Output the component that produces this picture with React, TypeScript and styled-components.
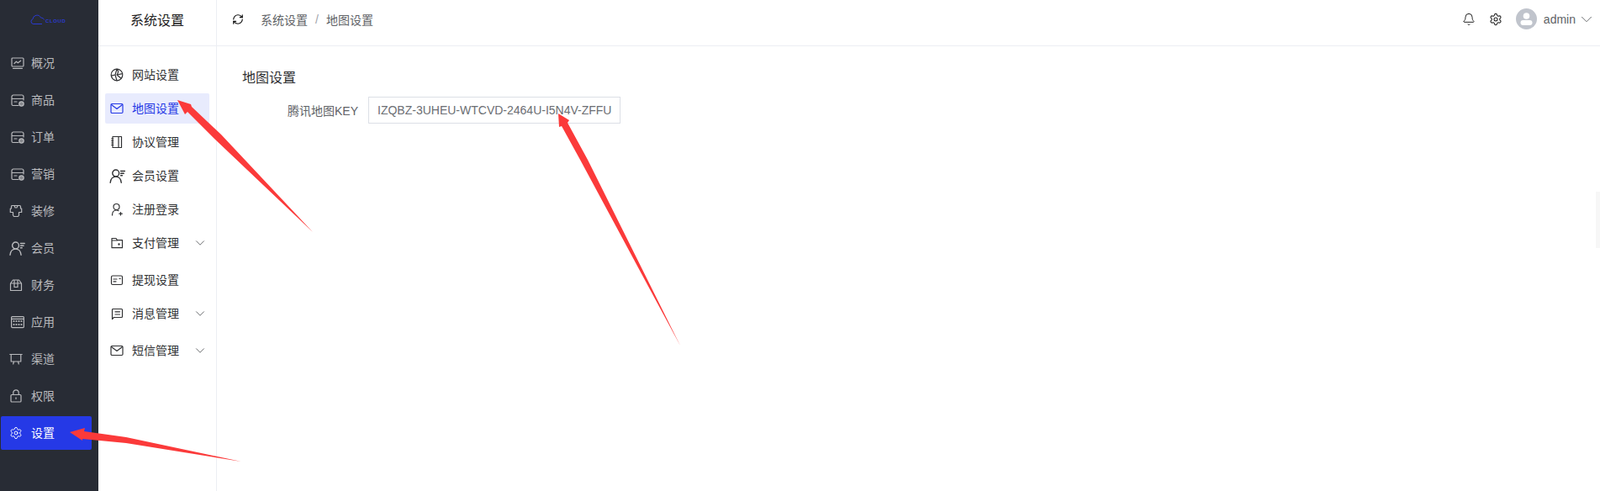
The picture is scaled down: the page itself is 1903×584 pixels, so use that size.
import * as React from 'react';
import styled, { createGlobalStyle } from 'styled-components';
import { Bell, ChevronDown, RefreshCw, Settings } from 'lucide-react';

const GlobalStyle = createGlobalStyle`
  html, body {
    margin: 0;
    padding: 0;
    background: #fff;
    font-family: "Liberation Sans", "Noto Sans CJK SC", sans-serif;
    font-size: 14px;
    overflow: hidden;
  }
  * { box-sizing: border-box; }
`;

const Page = styled.div`
  position: relative;
  display: flex;
  height: 584px;
  overflow: hidden;
`;

const Sidebar = styled.aside`
  flex: 0 0 117px;
  background: #282c35;
`;

const LogoBox = styled.div`
  height: 55px;
  padding: 17px 0 0 36px;
  display: flex;
  align-items: flex-start;
  color: #2a3ad0;
`;

const LogoText = styled.span`
  font-size: 6px;
  font-weight: 700;
  letter-spacing: 0.6px;
  line-height: 14px;
  margin: 1px 0 0 1px;
`;

const IconSlot = styled.span`
  flex: 0 0 16px;
  width: 16px;
  height: 16px;
  display: flex;
  align-items: center;
  justify-content: center;
`;

const ItemText = styled.span`
  margin-top: -2px;
`;

const SideItem = styled.div<{ $active?: boolean }>`
  display: flex;
  align-items: center;
  gap: 8px;
  width: 108px;
  height: 40px;
  margin: 0 0 4px 1px;
  padding-left: 12px;
  border-radius: 2px;
  font-size: 14px;
  color: ${p => (p.$active ? '#fff' : '#b9babd')};
  background: ${p => (p.$active ? '#2539e6' : 'transparent')};
`;

const SideGear = styled(Settings)`
  flex: none;
  margin-left: -4px;
`;

const SubNav = styled.nav`
  flex: 0 0 141px;
  border-right: 1px solid #eceef3;
`;

const SubTitle = styled.div`
  height: 55px;
  padding-bottom: 9px;
  border-bottom: 1px solid #eceef3;
  display: flex;
  align-items: center;
  justify-content: center;
  font-size: 16px;
  color: #222;
`;

const SubList = styled.div`
  padding: 16px 8px 0;
`;

const SubItem = styled.div<{ $active?: boolean; $group?: boolean }>`
  display: flex;
  align-items: center;
  gap: 10px;
  height: 36px;
  margin-bottom: ${p => (p.$group ? '8px' : '4px')};
  padding: 0 2px 0 6px;
  border-radius: 2px;
  font-size: 14px;
  color: ${p => (p.$active ? '#2539e6' : '#303133')};
  background: ${p => (p.$active ? '#e8ebfd' : 'transparent')};
`;

const Caret = styled(ChevronDown)`
  margin-left: auto;
  color: #4a4c50;
`;

const Main = styled.main`
  flex: 1;
  min-width: 0;
`;

const Header = styled.header`
  height: 55px;
  padding: 0 5px 9px 18px;
  border-bottom: 1px solid #eceef3;
  display: flex;
  align-items: center;
`;

const Crumbs = styled.div`
  display: flex;
  align-items: center;
  margin-left: 20px;
  color: #606266;
  font-size: 14px;
`;

const CrumbSep = styled.span`
  margin: 0 9px;
  color: #a0a3a9;
`;

const HeaderRight = styled.div`
  margin-left: auto;
  display: flex;
  align-items: center;
  gap: 16px;
  color: #222;
`;

const UserBox = styled.div`
  display: flex;
  align-items: center;
  color: #606266;
`;

const Avatar = styled.div`
  width: 25px;
  height: 25px;
  margin-right: 8px;
  border-radius: 50%;
  background: #c0c4cc;
  display: flex;
  align-items: center;
  justify-content: center;
`;

const AdminName = styled.span`
  font-size: 14px;
  margin-right: 2px;
`;

const Content = styled.section`
  padding: 28px 0 0 30px;
`;

const SectionTitle = styled.h2`
  margin: 0 0 12px;
  font-size: 16px;
  font-weight: 400;
  line-height: 20px;
  color: #303133;
`;

const FormRow = styled.div`
  display: flex;
  align-items: center;
`;

const FieldLabel = styled.label`
  width: 150px;
  padding-right: 12px;
  text-align: right;
  color: #606266;
  font-size: 14px;
`;

const FieldInput = styled.input`
  width: 300px;
  height: 32px;
  padding: 0 10px;
  border: 1px solid #dcdfe6;
  border-radius: 0;
  outline: none;
  font: inherit;
  font-size: 14px;
  color: #6b6e73;
  background: #fff;
`;

const EdgeTab = styled.div`
  position: absolute;
  right: 0;
  top: 228px;
  width: 5px;
  height: 67px;
  background: #f7f7f7;
`;

const ArrowLayer = styled.svg`
  position: absolute;
  inset: 0;
  pointer-events: none;
`;

type GlyphProps = React.PropsWithChildren<{ size?: number; shift?: number }>;

// shift moves the drawing left inside its slot, some of the icons sit off centre
const Glyph: React.FC<GlyphProps> = ({ size = 16, shift = 0, children }) => (
  <svg
    width={size}
    height={size}
    viewBox={`${shift} 0 16 16`}
    fill="none"
    stroke="currentColor"
    strokeWidth="1.2"
    strokeLinecap="round"
    strokeLinejoin="round"
    overflow="visible"
    style={{ flex: 'none' }}
  >
    {children}
  </svg>
);

const IconMonitor = () => (
  <Glyph>
    <rect x="1" y="2" width="14" height="10" rx="1" />
    <path d="M4 8.5 6.3 6.2l2 1.6 3.4-2.6M2.5 14.3h11" />
  </Glyph>
);

const IconCard = () => (
  <Glyph>
    <path d="M15 8V4a2 2 0 0 0-2-2H3a2 2 0 0 0-2 2v9a1.5 1.5 0 0 0 1.5 1.5H9M1 6.5h14M4 10h3" />
    <circle cx="12.5" cy="12.5" r="2.7" fill="currentColor" fillOpacity="0.65" />
  </Glyph>
);

const IconShirt = () => (
  <Glyph shift={2}>
    <path d="M3.5 1.5h9a1 1 0 0 1 1 1V5h1.2v4.5h-3.2V13l-1 1.500h-5l-1-1.500V9.500H1.300V5h1.200V2.500a1 1 0 0 1 1-1zM6 1.500l1 2.500h2l1-2.500" />
  </Glyph>
);

const IconMember = ({ shift = 0 }: { shift?: number }) => (
  <Glyph size={19} shift={shift}>
    <circle cx="6.5" cy="5" r="3.3" />
    <path d="M1 14.5c.3-3.5 2.500-6 5.500-6s5.200 2.500 5.500 6M11.500 3h4M11.500 5.200h3M11.500 7.400h1.500" />
  </Glyph>
);

const IconBox = () => (
  <Glyph shift={2}>
    <path d="M1.500 6h13v8.500h-13zM1.500 6 4.500 2h7l3 4M6 6V2M10 6V2M6 6v4.500h4V6" />
  </Glyph>
);

const IconGrid = () => (
  <svg width="16" height="16" viewBox="0 0 16 16" style={{ flex: 'none' }}>
    <rect x="0.6" y="1.6" width="14.8" height="13" rx="1" fill="none" stroke="currentColor" strokeWidth="1.2" />
    <path d="M1 4.4h14" stroke="currentColor" strokeWidth="1.2" />
    {[3.5, 6.5, 9.5, 12.5].map(x =>
      [7, 11].map(y => <circle key={`${x}-${y}`} cx={x} cy={y} r="1.1" fill="currentColor" />),
    )}
  </svg>
);

const IconBoard = () => (
  <Glyph shift={2}>
    <path d="M.8 2.5h14.4M2.200 2.500V11h11.600V2.500M5.500 11l-.8 3M10.500 11l.8 3" />
  </Glyph>
);

const IconLock = () => (
  <Glyph shift={2}>
    <rect x="2" y="6.5" width="12" height="8.5" rx="1" />
    <path d="M4.800 6.500V4a3.200 3.200 0 0 1 6.400 0v2.500M8 9.800v1.700" />
  </Glyph>
);

const IconBall = () => (
  <Glyph>
    <circle cx="8" cy="8" r="6.8" />
    <path d="M8 1.200 6 8l-4.700 1.200M8 1.200c2.200 2 2.200 4 0 6.800l5 4.200M6 8l2 6.800M8 8l6.700-1.400" />
  </Glyph>
);

const IconMail = () => (
  <Glyph>
    <rect x="1" y="2.5" width="14" height="11" rx="1.2" />
    <path d="m1.500 3.500 6.500 5 6.500-5" />
  </Glyph>
);

const IconBook = () => (
  <Glyph>
    <rect x="3" y="1.5" width="10.5" height="13" />
    <path d="M10 1.500v13M1.700 4h2M1.700 6.500h2M1.700 9h2M1.700 11.500h2" />
  </Glyph>
);

const IconUserPlus = () => (
  <Glyph>
    <circle cx="7.5" cy="5" r="3.5" />
    <path d="M2.500 15c0-3.500 1.800-6 5-6 1 0 1.800.2 2.500.7M12.500 11.500V15M10.800 13.200h3.500" />
  </Glyph>
);

const IconFolder = () => (
  <Glyph>
    <path d="M2 2.500h5l1.500 2.200h6v9H2zM2 5h6.500" />
    <circle cx="10.5" cy="9.5" r=".6" fill="currentColor" />
  </Glyph>
);

const IconWithdraw = () => (
  <Glyph>
    <rect x="1.5" y="3" width="13" height="10.5" rx="1.5" />
    <path d="M4 7h4M4 9.800h3M11 6.500h1.200" />
  </Glyph>
);

const IconChat = () => (
  <Glyph>
    <path d="M2.500 14.500v-11a1 1 0 0 1 1-1h10a1 1 0 0 1 1 1v8a1 1 0 0 1-1 1h-9zM6 5.800h5.500M6 9h5.500" />
  </Glyph>
);

const IconLogo = () => (
  <svg width="17" height="13" viewBox="0 0 17 13" fill="none" stroke="currentColor" strokeWidth="1">
    <path d="M4 11.500h-.5a3 3 0 0 1-.5-5.800A5 5 0 0 1 12.500 4c2 .2 3.500 1 4 2.500" />
    <path d="M3.500 11.500H14" />
  </svg>
);

const AvatarFace = () => (
  <svg width="17" height="17" viewBox="0 0 17 17" fill="#fff">
    <circle cx="8.5" cy="5" r="3.8" />
    <rect x="1.5" y="10" width="14" height="6" rx="3" />
  </svg>
);

const sideItems: { label: string; icon: React.ReactNode; active?: boolean }[] = [
  { label: '概况', icon: <IconMonitor /> },
  { label: '商品', icon: <IconCard /> },
  { label: '订单', icon: <IconCard /> },
  { label: '营销', icon: <IconCard /> },
  { label: '装修', icon: <IconShirt /> },
  { label: '会员', icon: <IconMember shift={1} /> },
  { label: '财务', icon: <IconBox /> },
  { label: '应用', icon: <IconGrid /> },
  { label: '渠道', icon: <IconBoard /> },
  { label: '权限', icon: <IconLock /> },
  { label: '设置', icon: <SideGear size={16} strokeWidth={1.4} />, active: true },
];

const subItems: { label: string; icon: React.ReactNode; active?: boolean; group?: boolean; caret?: boolean }[] = [
  { label: '网站设置', icon: <IconBall /> },
  { label: '地图设置', icon: <IconMail />, active: true },
  { label: '协议管理', icon: <IconBook /> },
  { label: '会员设置', icon: <IconMember /> },
  { label: '注册登录', icon: <IconUserPlus /> },
  { label: '支付管理', icon: <IconFolder />, group: true, caret: true },
  { label: '提现设置', icon: <IconWithdraw /> },
  { label: '消息管理', icon: <IconChat />, group: true, caret: true },
  { label: '短信管理', icon: <IconMail />, caret: true },
];

// the red markers somebody drew on top of the screenshot
const arrows = [
  '211,119 227,124 228,127 263,160 372,276 255,165 223,133 220,136',
  '664,135 677,143 675,146 699,190 809,411 690,190 668,150 665,151',
  '83,514 101,509 100,513 150,520 287,549 150,527 98,522 98,524',
];

export default function App() {
  return (
    <Page>
      <GlobalStyle />
      <Sidebar>
        <LogoBox>
          <IconLogo />
          <LogoText>CLOUD</LogoText>
        </LogoBox>
        {sideItems.map(item => (
          <SideItem key={item.label} $active={item.active}>
            <IconSlot>{item.icon}</IconSlot>
            <ItemText>{item.label}</ItemText>
          </SideItem>
        ))}
      </Sidebar>
      <SubNav>
        <SubTitle>系统设置</SubTitle>
        <SubList>
          {subItems.map(item => (
            <SubItem key={item.label} $active={item.active} $group={item.group}>
              <IconSlot>{item.icon}</IconSlot>
              <ItemText>{item.label}</ItemText>
              {item.caret && <Caret size={18} strokeWidth={1.1} />}
            </SubItem>
          ))}
        </SubList>
      </SubNav>
      <Main>
        <Header>
          <RefreshCw size={14} strokeWidth={2} color="#111" />
          <Crumbs>
            <span>系统设置</span>
            <CrumbSep>/</CrumbSep>
            <span>地图设置</span>
          </Crumbs>
          <HeaderRight>
            <Bell size={16} strokeWidth={1.5} />
            <Settings size={16} strokeWidth={1.6} />
            <UserBox>
              <Avatar>
                <AvatarFace />
              </Avatar>
              <AdminName>admin</AdminName>
              <ChevronDown size={22} strokeWidth={1} />
            </UserBox>
          </HeaderRight>
        </Header>
        <Content>
          <SectionTitle>地图设置</SectionTitle>
          <FormRow>
            <FieldLabel>腾讯地图KEY</FieldLabel>
            <FieldInput readOnly value="IZQBZ-3UHEU-WTCVD-2464U-I5N4V-ZFFU" />
          </FormRow>
        </Content>
      </Main>
      <EdgeTab />
      <ArrowLayer width="1903" height="584" viewBox="0 0 1903 584">
        {arrows.map(points => (
          <polygon key={points} points={points} fill="#fb3a3a" />
        ))}
      </ArrowLayer>
    </Page>
  );
}
